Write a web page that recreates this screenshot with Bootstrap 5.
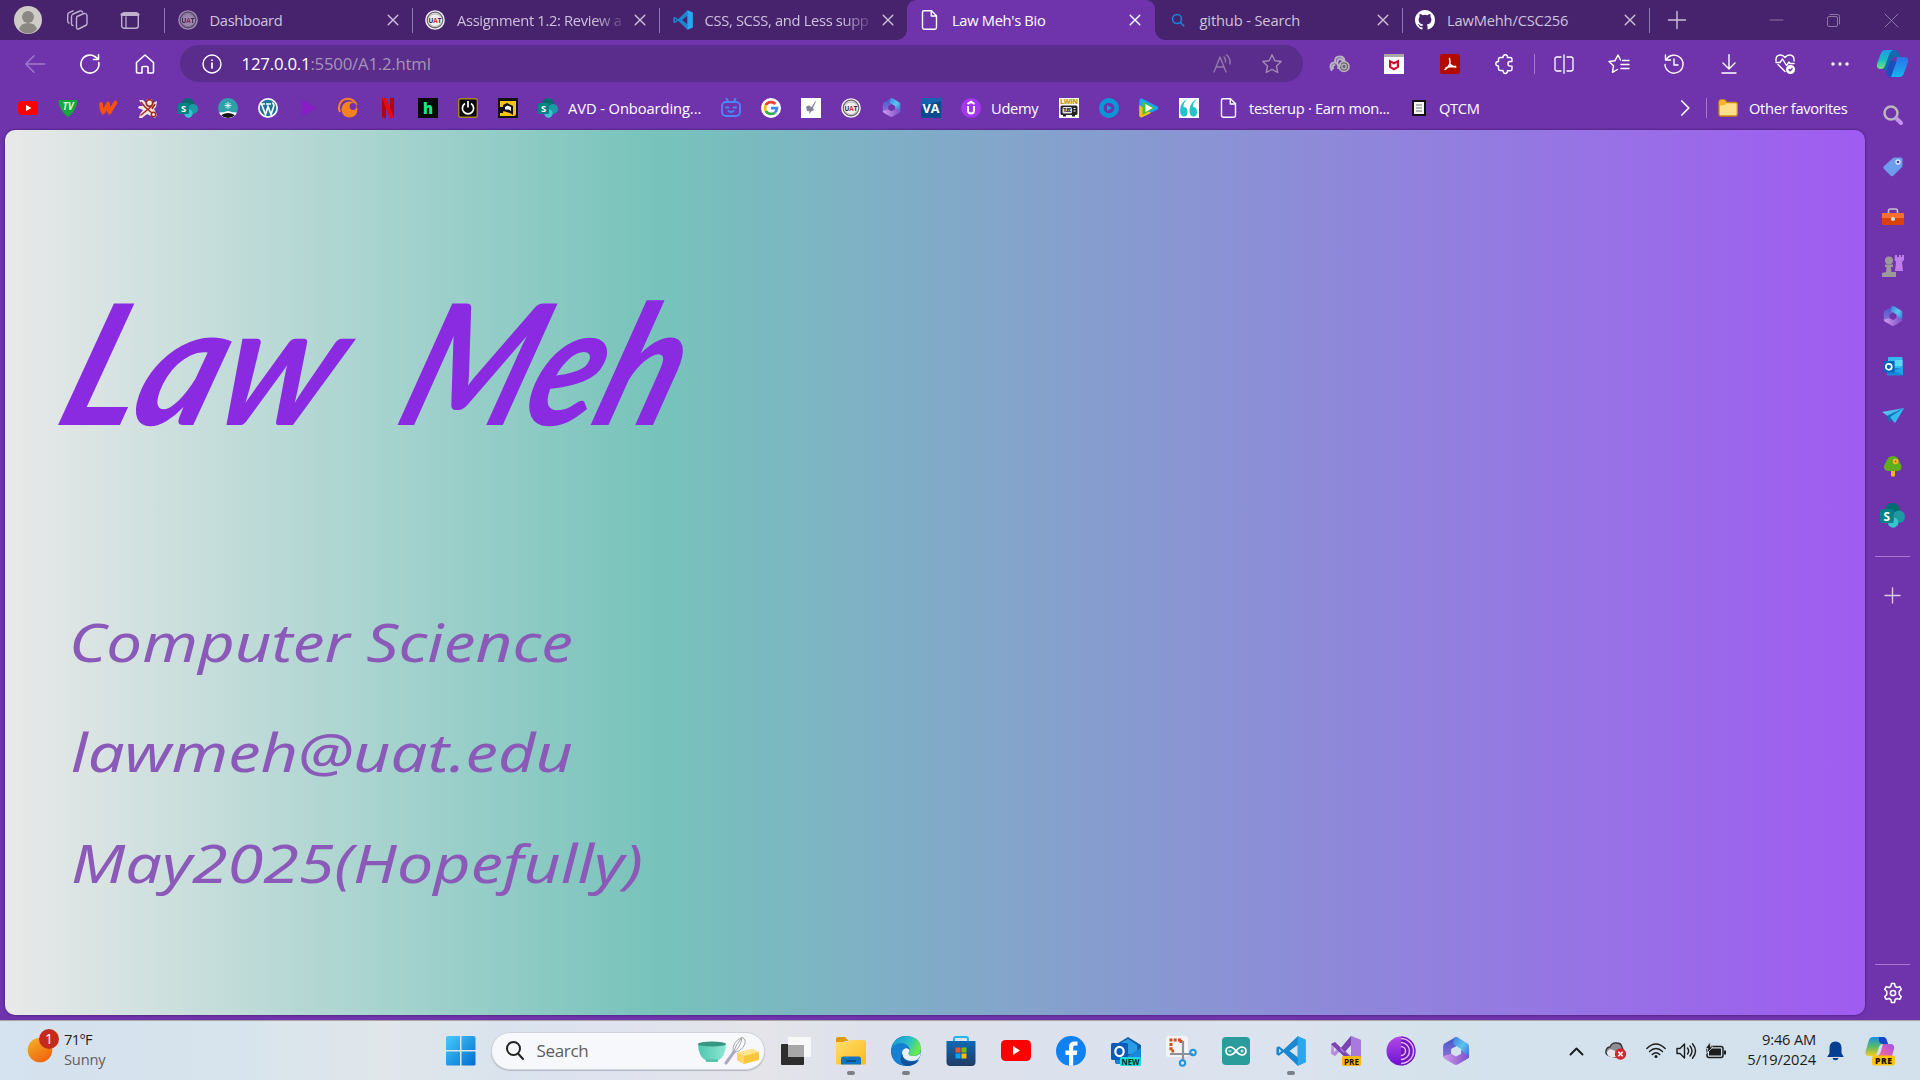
<!DOCTYPE html>
<html lang="en">
<head>
<meta charset="utf-8">
<title>Law Meh's Bio</title>
<link rel="stylesheet" href="https://cdn.jsdelivr.net/npm/bootstrap@5.3.0/dist/css/bootstrap.min.css">
<style>
body{width:1920px;height:1080px;overflow:hidden;background:#6f34ac;font-family:"Open Sans","Noto Sans",sans-serif;font-size:14.7px;letter-spacing:-.32px;color:#fff;line-height:20px}
svg{display:block;flex:none;overflow:visible}
svg text{letter-spacing:0}
.cell{display:flex;align-items:center;justify-content:center;flex:none}
.strip{height:40px;background:#47226d}
.tabx{width:247.5px;height:40px;padding-left:13px;color:#cdc2da;border-left:0 solid;position:relative}
.tabx .ttl{width:166px;margin-left:12px;margin-right:7px;white-space:nowrap}
.tabx .fade-end{-webkit-mask-image:linear-gradient(90deg,#000 138px,rgba(0,0,0,.15) 166px);mask-image:linear-gradient(90deg,#000 138px,rgba(0,0,0,.15) 166px)}
.sepd::before{content:"";position:absolute;left:-.5px;top:8px;width:1px;height:25px;background:#8f78aa}
.tab-on{background:#6f34ac;color:#fff;border-radius:9px 9px 0 0}
.tab-on::before,.tab-on::after{content:"";position:absolute;bottom:0;width:10px;height:10px}
.tab-on::before{left:-10px;background:radial-gradient(circle at 0 0,transparent 9.5px,#6f34ac 10px)}
.tab-on::after{right:-10px;background:radial-gradient(circle at 100% 0,transparent 9.5px,#6f34ac 10px)}
.toolbar-row{height:47px;padding-left:7px}
.url{width:1123px;height:37px;border-radius:19px;background:#5a2c8b;font-size:16.8px;letter-spacing:-.22px;color:#a595b7}
.ln{fill:none;stroke:currentColor;stroke-width:1.4;stroke-linecap:round;stroke-linejoin:round}
.t55{width:55.2px}.b40{width:40px;height:24px}
.favs{height:43px;padding:0 0 2px 8px}
.lbl{white-space:nowrap}
.pageview{width:1860px;height:885px;border-radius:10px;margin-left:5px;background:linear-gradient(90deg,#e9e9e9 0,#77c3bb 35%,#a05bf1 100%);box-shadow:0 0 3px #3f1a6a}
.sidebar-col{width:55px;height:933px}
.sidebar-col hr{width:35px;margin:0;border-color:#b58ad8;opacity:.8}
.taskbar{height:60px;border-top:1px solid #a5a5a5;color:#1c1c1c;background:linear-gradient(90deg,#d5e2ef 0,#d7e4ed 12%,#e0e6ea 20%,#dae3ed 26%,#dfe3ef 32%,#e4e4e9 39.5%,#dde1ec 46%,#dbe3ee 66%,#d3e2ec 78%,#d2e1ec 100%)}
.searchbox{width:274px;height:38px;border-radius:19px;background:#f6f8fc;border:1px solid #cfd3dc;font-size:17px;color:#5c5c5c;box-shadow:0 1px 1px #b6bac4}
.twoline{padding-bottom:4px;letter-spacing:-.2px}
.app{width:55px;height:60px;position:relative}
.run::after{content:"";position:absolute;left:23.5px;bottom:6px;width:8px;height:4px;border-radius:2px;background:#7c7f84}
.name-art{fill:#8a2be2;font-family:Lato,"Open Sans",sans-serif;font-style:italic;font-weight:700}
.info-art{fill:#8b5ab8;font-family:"Noto Sans","Open Sans",sans-serif;font-style:italic}
</style>
<script src="https://cdn.jsdelivr.net/npm/bootstrap@5.3.0/dist/js/bootstrap.bundle.min.js"></script>
</head>
<body>
<svg width="0" height="0" class="position-absolute">
<defs>
<linearGradient id="gm1" x1="0" y1="0" x2="1" y2="1"><stop offset="0" stop-color="#3f7fe0"/><stop offset=".5" stop-color="#5cc4f2"/><stop offset="1" stop-color="#3a62c8"/></linearGradient>
<linearGradient id="gm2" x1="0" y1="0" x2="0" y2="1"><stop offset="0" stop-color="#3f57c8"/><stop offset="1" stop-color="#8a6fd8"/></linearGradient>
<linearGradient id="gm3" x1="0" y1="0" x2="1" y2="0"><stop offset="0" stop-color="#cf9aea"/><stop offset="1" stop-color="#7a4fc9"/></linearGradient>
<linearGradient id="gfold" x1="0" y1="0" x2="1" y2="1"><stop offset="0" stop-color="#ffdf70"/><stop offset="1" stop-color="#fbb91c"/></linearGradient>
<linearGradient id="gedge" x1="0" y1="0" x2="1" y2=".4"><stop offset="0" stop-color="#1592dc"/><stop offset=".6" stop-color="#2cc0c8"/><stop offset="1" stop-color="#6be84c"/></linearGradient>
<linearGradient id="gstore" x1="0" y1="0" x2="0" y2="1"><stop offset="0" stop-color="#0d6ab8"/><stop offset="1" stop-color="#213a66"/></linearGradient>
<linearGradient id="gwin" x1="0" y1="0" x2="1" y2="1"><stop offset="0" stop-color="#48cbfb"/><stop offset="1" stop-color="#006cd0"/></linearGradient>
<linearGradient id="gtel" x1="0" y1="0" x2="1" y2="1"><stop offset="0" stop-color="#6be0ff"/><stop offset="1" stop-color="#1478c8"/></linearGradient>
<linearGradient id="gsun" x1="0" y1="0" x2=".6" y2="1"><stop offset="0" stop-color="#f5b42c"/><stop offset="1" stop-color="#f0660d"/></linearGradient>
<linearGradient id="gvs" x1="0" y1="0" x2="1" y2="1"><stop offset="0" stop-color="#ddb4f4"/><stop offset="1" stop-color="#7b45b5"/></linearGradient>
<linearGradient id="gcp1" x1="0" y1="0" x2="0" y2="1"><stop offset="0" stop-color="#1b9de8"/><stop offset=".5" stop-color="#18bcc0"/><stop offset="1" stop-color="#7ae27c"/></linearGradient>
<linearGradient id="gcp2" x1="0" y1="0" x2="0" y2="1"><stop offset="0" stop-color="#2f6fe8"/><stop offset="1" stop-color="#12b5f2"/></linearGradient>
<linearGradient id="gcp3" x1="0" y1="0" x2="0" y2="1"><stop offset="0" stop-color="#1b8fe8"/><stop offset=".5" stop-color="#58b86a"/><stop offset="1" stop-color="#f5d020"/></linearGradient>
<linearGradient id="gcp4" x1="1" y1="0" x2="0" y2="1"><stop offset="0" stop-color="#a04ff0"/><stop offset="1" stop-color="#ff6f8a"/></linearGradient>
<linearGradient id="gtor" x1="0" y1="0" x2="0" y2="1"><stop offset="0" stop-color="#b44be8"/><stop offset="1" stop-color="#6e10d0"/></linearGradient>
<linearGradient id="gbowl" x1="0" y1="0" x2="1" y2="0"><stop offset="0" stop-color="#4fc5ac"/><stop offset="1" stop-color="#8de8d4"/></linearGradient>
</defs>
<symbol id="close" viewBox="0 0 20 20"><path d="M5.2 5.2l9.6 9.6M14.8 5.2l-9.6 9.6" stroke="currentColor" stroke-width="1.4" stroke-linecap="round"/></symbol>
<symbol id="uat" viewBox="0 0 20 20"><circle cx="10" cy="10" r="9.800" fill="#f6f6f6"/><circle cx="10" cy="10" r="7.800" fill="#f0eeee" stroke="#6d6770" stroke-width="1.200"/><path d="M4.500 7a6.500 6.500 0 0 1 11 0M4.500 13.500a6.500 6.500 0 0 0 11 0" fill="none" stroke="#b5b1b5" stroke-width="1"/><text x="10" y="12.500" font-size="6.500" font-weight="700" text-anchor="middle" fill="#2b2b33" font-family="Open Sans" textLength="13" lengthAdjust="spacingAndGlyphs">U<tspan fill="#c33">A</tspan>T</text></symbol>
<symbol id="sp" viewBox="0 0 20 20"><circle cx="10" cy="6" r="6" fill="#036c70"/><circle cx="15" cy="11" r="5" fill="#1a9ba1"/><circle cx="10.500" cy="15.500" r="4.200" fill="#37c6d0"/><rect x="0" y="5" width="11" height="11" rx="1" fill="#058187"/><text x="5.500" y="14" font-size="9.500" font-weight="700" text-anchor="middle" fill="#fff" font-family="Open Sans">S</text></symbol>
<symbol id="m365" viewBox="0 0 20 20"><path d="M10 0L2 4.500Q.8 5.300.8 6.700v7.500L6.500 13V8.500L12 5.500V1.200Q11 0 10 0z" fill="url(#gm2)"/><path d="M8.500.5q1.500-1 3 0L18 4.400q1.300.8 1.300 2.300V15l-5.600-2.500v-4L8 5z" fill="url(#gm1)"/><path d="M19.300 14q-.2 1.200-1.300 1.800l-6.500 3.700q-1.500.8-3 0L2 15.800Q.8 15 .8 13.800L6.500 12l3.500 2 3.700-2V9.500z" fill="url(#gm3)"/></symbol>
<symbol id="vsc" viewBox="0 0 20 20"><path d="M14.500.2L5 9.200 2 6.800.3 7.700v4.600l1.700.9 3-2.400 9.500 9 5.200-2.300V2.500zM2 11.500v-3L3.600 10zm12.500 2.700L9 10l5.500-4.200z" fill="#1b87d0" fill-rule="evenodd"/><path d="M14.500.2l5.200 2.300v15l-5.200 2.300z" fill="#2aa7f0"/></symbol>
<symbol id="pg" viewBox="0 0 20 20"><path class="ln" d="M4 .8h7.500l5 5V17.500q0 1.700-1.700 1.700H4.200q-1.700 0-1.700-1.700V2.300Q2.500.8 4 .8zM11.300 1v5h5"/></symbol>
</svg>

<header class="strip d-flex align-items-center">
 <div class="cell" style="width:56px"><svg width="28" height="28" viewBox="0 0 28 28"><circle cx="14" cy="14" r="14" fill="#cfccc8"/><circle cx="14" cy="11" r="6" fill="#8b8782"/><path d="M5 23q2-6 9-6t9 6q-4 4.500-9 4.500T5 23z" fill="#8b8782"/></svg></div>
 <div class="cell" style="width:43px;color:#c0b0d0"><svg class="ln" width="21" height="20" viewBox="0 0 21 20"><path d="M10 6.500l7-3q2.500-.5 3 2v8q0 1.500-1.500 2l-7 3.500q-2 .5-2-2V8.500q0-1.500.5-2zM6 15.500q-1.500 0-1.500-1.500V6.500Q4.500 5 6 4l7-3q1.500-.4 2.500 1M2 13Q.7 12.500.7 11V5Q.7 3.500 2 2.700L6 .8"/></svg></div>
 <div class="cell" style="width:61px;color:#c0b0d0"><svg class="ln" width="18" height="17" viewBox="0 0 18 17"><rect x=".7" y=".7" width="16.600" height="15.600" rx="2.500"/><path d="M1 2.400h16" stroke-width="3"/><path d="M5 5v11" stroke-width="1.300"/></svg></div>
 <div class="cell" style="width:4.500px"></div>
 <div class="tabx sepd d-flex align-items-center"><svg width="20" height="20" opacity=".5"><use href="#uat"/></svg><span class="ttl">Dashboard</span><svg width="20" height="20"><use href="#close"/></svg></div>
 <div class="tabx sepd d-flex align-items-center"><svg width="20" height="20"><use href="#uat"/></svg><span class="ttl fade-end">Assignment 1.2: Review a</span><svg width="20" height="20"><use href="#close"/></svg></div>
 <div class="tabx sepd d-flex align-items-center"><svg width="20" height="20"><use href="#vsc"/></svg><span class="ttl fade-end">CSS, SCSS, and Less supp</span><svg width="20" height="20"><use href="#close"/></svg></div>
 <div class="tabx tab-on d-flex align-items-center"><svg width="20" height="20"><use href="#pg"/></svg><span class="ttl">Law Meh's Bio</span><svg width="20" height="20"><use href="#close"/></svg></div>
 <div class="tabx d-flex align-items-center"><svg width="20" height="20" viewBox="0 0 20 20"><g fill="none" stroke="#1a86d8" stroke-width="1.600"><circle cx="9" cy="9" r="4.500"/><path d="M12.200 12.200l4 4"/></g></svg><span class="ttl" style="letter-spacing:-.15px">github - Search</span><svg width="20" height="20"><use href="#close"/></svg></div>
 <div class="tabx sepd d-flex align-items-center"><svg width="20" height="20" viewBox="0 0 16 16"><path fill="#fff" d="M8 0C3.580 0 0 3.580 0 8c0 3.540 2.290 6.530 5.470 7.590.4.070.55-.17.55-.38 0-.19-.01-.82-.01-1.490-2.010.37-2.530-.49-2.690-.94-.09-.23-.48-.94-.82-1.130-.28-.15-.68-.52-.01-.53.63-.01 1.080.58 1.230.82.72 1.210 1.870.87 2.330.66.07-.52.28-.87.510-1.070-1.780-.2-3.640-.89-3.640-3.950 0-.87.31-1.590.82-2.150-.08-.2-.36-1.020.08-2.120 0 0 .67-.21 2.200.82a7.700 7.700 0 0 1 4 0c1.530-1.040 2.200-.82 2.200-.82.44 1.100.16 1.920.08 2.120.51.56.82 1.270.82 2.150 0 3.070-1.870 3.750-3.650 3.950.29.25.54.73.54 1.480 0 1.070-.01 1.930-.01 2.200 0 .21.15.46.55.38A8 8 0 0 0 16 8c0-4.420-3.580-8-8-8z"/></svg><span class="ttl" style="letter-spacing:-.18px">LawMehh/CSC256</span><svg width="20" height="20"><use href="#close"/></svg></div>
 <div class="cell sepd position-relative h-100" style="width:55px;color:#cdc2da"><svg class="ln" width="18" height="18"><path d="M9 .5v17M.5 9h17"/></svg></div>
 <div class="cell ms-auto" style="width:57px;color:#8d77a6"><svg class="ln" width="13" height="14"><path d="M0 7h13" stroke-width="1"/></svg></div>
 <div class="cell" style="width:57px;color:#8d77a6"><svg class="ln" width="13" height="13" style="stroke-width:1"><rect x=".5" y="2.500" width="10" height="10" rx="1.500"/><path d="M3 .5h7.500q2 0 2 2V10"/></svg></div>
 <div class="cell" style="width:58px;color:#8d77a6"><svg class="ln" width="13" height="13" style="stroke-width:1"><path d="M0 0l13 13M13 0L0 13"/></svg></div>
</header>

<nav class="toolbar-row d-flex align-items-center">
 <div class="cell t55" style="color:#a27bcb"><svg class="ln" width="20" height="18"><path d="M19.500 9H.8M9 .8L.8 9 9 17.200"/></svg></div>
 <div class="cell t55"><svg class="ln" width="20" height="20" style="stroke-width:1.600"><path d="M18.800 8.500A9 9 0 1 1 15.500 3L18 5M18.500.8V5.500h-5"/></svg></div>
 <div class="cell t55"><svg class="ln" width="20" height="20" style="stroke-width:1.600"><path d="M1.500 8.500L10 1l8.500 7.500V18q0 1-1 1H13v-5.500q0-1-1-1H8q-1 0-1 1V19H2.500q-1 0-1-1z"/></svg></div>
 <div class="url d-flex align-items-center" style="margin-left:7px">
  <svg class="ln text-white" style="margin-left:22px" width="20" height="20"><circle cx="10" cy="10" r="9"/><path d="M10 9v5M10 6v.2" stroke-width="1.700"/></svg>
  <span class="lbl" style="margin-left:20px"><span class="text-white">127.0.0.1</span>:5500/A1.2.html</span>
  <svg class="ln ms-auto" width="20" height="20" style="color:#927ba9"><path d="M1 18L7 3l6 15M3.200 13h7.800M11 3q2 2 1.500 5M13.500 1q4 3 3.500 9"/></svg>
  <svg class="ln" width="20" height="20" viewBox="0 0 20 20" style="color:#a08ab6;margin:0 21px 0 29px"><path d="M10 .8l2.800 5.900 6.400.8-4.700 4.500 1.200 6.500L10 15.300l-5.700 3.200 1.200-6.500L.8 7.500l6.400-.8z"/></svg>
 </div>
 <div class="d-flex align-items-center" style="margin-left:9px">
 <div class="cell t55"><svg width="21" height="19" viewBox="0 0 21 19"><g fill="none" stroke="#b9b5bd" stroke-linecap="round"><path d="M2.500 16Q-.5 9 5.500 8.500q3-.2 3.500 3M4 14.500q-1-3.500 1.500-3.500" stroke-width="2"/><path d="M6 7.500Q6 2.500 10.500 2.500t5 4.500M8.500 8q0-3 2.500-3t2.500 2.500" stroke-width="2"/><circle cx="15" cy="12.500" r="5" fill="#6a6570" stroke-width="1.600"/><circle cx="15" cy="12.500" r="2.300" stroke-width="1.200"/><path d="M9 14l2-3" stroke-width="2"/></g></svg></div>
 <div class="cell t55"><svg width="20" height="20"><path fill="#fff" d="M0 0h20v20H0z"/><path fill="#a9a9a9" d="M0 0h20v3H0z"/><path d="M5 5.500l5 2.500 5-2.500v8l-5 3-5-3zM7.200 9v3.500l2.800 1.600 2.800-1.600V9L10 10.500z" fill="#c8102e" fill-rule="evenodd"/></svg></div>
 <div class="cell t55"><svg width="20" height="20"><rect width="20" height="20" rx="2.500" fill="#b30b00"/><path d="M9.500 4.500q1 4 0 6-2 4-4.500 5M9.800 10q1.500 2.500 6 3M6 13.800q4-1.800 9.500-1.300" fill="none" stroke="#fff" stroke-width="1.500" stroke-linecap="round"/></svg></div>
 <div class="cell t55"><svg class="ln" width="20" height="20"><path d="M5.500 3.500H8q0-2.700 2.300-2.700t2.200 2.700H15q2 0 2 2v2h-2q-2 0-2 2.300t2 2.300h2v2.700q0 2-2 2h-2.500q0 2.700-2.200 2.700T8 16.500H5.500q-2 0-2-2V12Q.8 12 .8 9.800t2.700-2.300v-2q0-2 2-2z"/></svg></div>
 </div>
 <div class="vr bg-white" style="height:20px;align-self:center;margin-left:2px;opacity:.35"></div>
 <div class="d-flex" style="margin-left:1px">
 <div class="cell t55"><svg class="ln" width="20" height="20"><path d="M7 17H3q-2 0-2-2V5q0-2 2-2h4M13 3h4q2 0 2 2v10q0 2-2 2h-4M10 .8v18.500" style="stroke-width:1.300"/></svg></div>
 <div class="cell t55"><svg class="ln" width="22" height="20"><path d="M12.500 6L10 1 7 6.700 1 7.500l4.500 4.300-1 6.500 5-2.800M14.500 6.500H21M13 10.500h8M13 14.500h8"/></svg></div>
 <div class="cell t55"><svg class="ln" width="20" height="20"><path d="M2 6A9 9 0 1 1 1 10.500M1.500 1v5h5M10 5v6h4"/></svg></div>
 <div class="cell t55"><svg class="ln" width="16" height="20"><path d="M8 .8v14M2 9l6 6 6-6M1 19h14"/></svg></div>
 <div class="cell t55"><svg class="ln" width="20" height="20"><path d="M10 17.500L3 10.500M1 7Q.5 1 5.500 1 8 1 10 3.500 12 1 14.500 1 19.500 1 19 7M1 8.500h4L7.500 5l4 6.500L14 8l1 1.500h4"/><circle cx="15.500" cy="15.500" r="3.900" fill="#fff"/><path d="M14 15.500l1.200 1.200 2-2.200" stroke="#6f34ac"/></svg></div>
 <div class="cell t55"><svg width="18" height="4" fill="#fff"><circle cx="2" cy="2" r="1.700"/><circle cx="9" cy="2" r="1.700"/><circle cx="16" cy="2" r="1.700"/></svg></div>
 </div>
 <div class="cell" style="width:51px"><svg width="31" height="27" viewBox="0 0 31 27"><path d="M17 0q4 0 5 4l1 3h-5q-3 0-4 3l-4 10H6L11 5q2-5 6-5z" fill="#126bb0"/><path d="M9 0h8q-4 1-5 5L8 16q-1 3-4 3-5 0-4-5L4 3q1-3 5-3z" fill="url(#gcp1)"/><path d="M14 10l-5 12q1 5 5 5h3l5-14z" fill="#1a4fc0"/><path d="M20 7h7q5 0 4 5l-4 11q-1 4-5 4h-8l5-14q1-4 1-6z" fill="url(#gcp2)"/></svg></div>
</nav>

<div class="d-flex">
<div style="width:1865px">
<div class="favs d-flex align-items-center">
 <div class="cell b40"><svg width="20" height="14"><rect width="20" height="14" rx="3.500" fill="#f00"/><path d="M8 4l5.500 3L8 10z" fill="#fff"/></svg></div>
 <div class="cell b40"><svg width="20" height="18"><path d="M2 1h16q2 0 1.500 2-2 9-8 14-1.500 1.500-3 0Q2 11 .5 3 0 1 2 1z" fill="#12a83b"/><text x="10" y="11" font-size="10" font-weight="700" font-style="italic" fill="#d6f5d6" text-anchor="middle">TV</text></svg></div>
 <div class="cell b40"><svg width="18" height="14"><path d="M2 3q1 8 2 8.500Q7 8 9 2.500 9 8 10.500 11.500 13 7 16.500 1.500" fill="none" stroke="#ff500a" stroke-width="3.800" stroke-linecap="round" stroke-linejoin="round"/></svg></div>
 <div class="cell b40"><svg width="20" height="20"><path d="M1 2h4l3 3 1-4h5l1 4 4-2-1 6-2 2 3 6-2 3-4-2-4-2-5 4H1l1-4 3-4-5-2 1-2 4 0z" fill="#f4e6e2"/><path d="M2.500 17.500L14 8M3 4l4 5 7 6M17 6l-3 5" stroke="#a32a22" stroke-width="1.600" fill="none"/><circle cx="11.500" cy="5" r="3.300" fill="none" stroke="#a32a22" stroke-width="1.700"/><circle cx="15.500" cy="16.500" r="2.200" fill="none" stroke="#a32a22" stroke-width="1.400"/></svg></div>
 <div class="cell b40"><svg width="20" height="20"><use href="#sp"/></svg></div>
 <div class="cell b40"><svg width="20" height="20"><circle cx="10" cy="10" r="10" fill="#2f9fa8"/><path d="M1 14.500q4 0 9-1.500 5 1.500 9 1.500Q16.500 20 10 20T1 14.500z" fill="#fff"/><path d="M3 17.200q4-2.200 7-2.200t7 2.200q-3 2.800-7 2.800t-7-2.800z" fill="#151515"/><path d="M10 4v7M6.500 7.500h7M7.500 5l5 5M12.500 5l-5 5" stroke="#d8f8ff" stroke-width=".9"/></svg></div>
 <div class="cell b40"><svg width="20" height="20"><circle cx="10" cy="10" r="10" fill="#f4f8fb"/><circle cx="10" cy="10" r="8.300" fill="#21759b"/><path d="M3.500 6l4 10.500L10 8.500l3 8 3-9q-.5-1.500-1.500-3M2.500 6H7M8 6h5" stroke="#fff" stroke-width="1.600" fill="none"/></svg></div>
 <div class="cell b40"><svg width="16" height="16"><path d="M2 0l13 7q1 .9 0 1.800L2 16z" fill="#8a1cc8"/></svg></div>
 <div class="cell b40"><svg width="20" height="20"><path d="M2 14A9 9 0 1 1 18.500 7" fill="none" stroke="#f58220" stroke-width="2"/><circle cx="11.500" cy="11.500" r="8" fill="#f58220"/><circle cx="15" cy="8.500" r="3.400" fill="#6f34ac"/></svg></div>
 <div class="cell b40"><svg width="12" height="20"><path d="M0 0h4v20l-4-.5zM8 0h4v19.500L8 20z" fill="#b1060f"/><path d="M0 0h4l8 19.500L8 20z" fill="#e50914"/></svg></div>
 <div class="cell b40"><svg width="20" height="20"><path d="M0 0h20v20H0z" fill="#060a08"/><text x="10" y="16" font-size="15" font-weight="800" fill="#1ce783" text-anchor="middle">h</text></svg></div>
 <div class="cell b40"><svg width="20" height="20"><rect x=".7" y=".7" width="18.600" height="18.600" rx="1.500" fill="#0b0b0b" stroke="#a98224" stroke-width="1.400"/><path d="M7 5.500a5.600 5.600 0 1 0 6 0M10 3v6.500" fill="none" stroke="#fff" stroke-width="1.700"/></svg></div>
 <div class="cell b40"><svg width="20" height="20"><path d="M0 0h20v20H0z" fill="#111"/><path d="M2 3h16v13q0 2-2 2H2v-3h3L6 9H2z" fill="#f7c313"/><path d="M5 9V7l4-2 6 3v9l-3-2-7-2z" fill="#111"/><path d="M7 9l2.500-1.500L13 9v4l-2.500-1.500H7z" fill="#fff"/></svg></div>
 <div class="cell b40"><svg width="20" height="20"><use href="#sp"/></svg></div>
 <span class="lbl" style="width:143px;letter-spacing:-.08px">AVD - Onboarding...</span>
 <div class="cell b40"><svg width="20" height="19" fill="none" stroke="#4a86f7" stroke-width="1.900" stroke-linecap="round"><rect x="1" y="4" width="18" height="14" rx="4"/><path d="M5.500.8L7.500 4M14.500.8L12.500 4M5 9.500h2.500M12.500 9.500H15M7.500 13q2.500 2.200 5 0"/></svg></div>
 <div class="cell b40"><svg width="20" height="20"><circle cx="10" cy="10" r="10" fill="#fff"/><g fill="none" stroke-width="2.700"><path d="M14.400 6A6 6 0 0 0 4.700 7.200" stroke="#ea4335"/><path d="M4.700 7.200a6 6 0 0 0 0 5.600" stroke="#fbbc05"/><path d="M4.700 12.800A6 6 0 0 0 14 14.400" stroke="#34a853"/><path d="M14 14.400a6 6 0 0 0 2-4.200H10" stroke="#4285f4"/></g></svg></div>
 <div class="cell b40"><svg width="20" height="20"><path d="M0 0h20v20H0z" fill="#fff"/><path d="M15 3.500L10 14l-2 2 .5-3L14 3.500zM5 8.500l3-1 4 2.500 1 2-3 1.500-4-.5z" fill="#7d8499"/></svg></div>
 <div class="cell b40"><svg width="20" height="20"><use href="#uat"/></svg></div>
 <div class="cell b40"><svg width="19" height="19"><use href="#m365"/></svg></div>
 <div class="cell b40"><svg width="20" height="20"><path d="M0 0h20v20H0z" fill="#0a4a8f"/><path d="M0 0h20v3L0 8z" fill="#1662ae"/><text x="10" y="15" font-size="13" font-weight="700" fill="#fff" text-anchor="middle" textLength="17" lengthAdjust="spacingAndGlyphs">VA</text></svg></div>
 <div class="cell b40"><svg width="20" height="20"><circle cx="10" cy="10" r="10" fill="#a435f0"/><path d="M7 8v4.500q0 3 3 3t3-3V8M6.500 6L10 3.800 13.500 6" fill="none" stroke="#fff" stroke-width="2"/></svg></div>
 <span class="lbl" style="width:58px">Udemy</span>
 <div class="cell b40"><svg width="20" height="20"><path d="M0 0h20v20H0z" fill="#fff"/><rect x="1.500" y="7.500" width="17" height="9.500" rx="1.500" fill="#222"/><path d="M4 17h3v1.500H4zM13 17h3v1.500h-3z" fill="#222"/><rect x="3.500" y="9" width="9.500" height="6.500" rx="1.500" fill="#e4e4e4"/><path d="M14.500 10.500h2M14.500 13h2" stroke="#fff"/><text x="8.200" y="14" font-size="4.500" font-weight="700" fill="#333" text-anchor="middle" textLength="8">TUBE</text><text x="10" y="6" font-size="7" font-weight="800" fill="#c79a12" text-anchor="middle" textLength="18">LWIN</text></svg></div>
 <div class="cell b40"><svg width="20" height="20"><circle cx="10" cy="10" r="10" fill="#0a96d6"/><circle cx="10" cy="10" r="5.300" fill="#6a34ae"/><path d="M8 7l5 3-5 3z" fill="#0aa2dc"/></svg></div>
 <div class="cell b40"><svg width="20" height="20"><path d="M3 .6Q.3 0 .3 3v14q0 3 3 2l15-7.500q2-1.500 0-3z" fill="#18a6f5"/><path d="M.3 7v10q0 3 2.700 2.300L12 15z" fill="#fbbf10"/><path d="M3.500 3v14L16 10z" fill="#46c33d"/><path d="M6.500 6v8L13.500 10z" fill="#fff"/></svg></div>
 <div class="cell b40"><svg width="20" height="20"><path d="M0 0h20v20H0z" fill="#fff"/><path d="M8.500 1Q4 5 4.500 9q4 0 4 5t-4 4.500Q1 18 1 12 1.500 4 8.500 1zM18 1q-4.500 4-4 8 4 0 4 5t-4 4.500q-3.500-.5-3.500-6.500Q11 4 18 1z" fill="#22c4ca"/></svg></div>
 <div class="cell b40"><svg width="20" height="20"><use href="#pg"/></svg></div>
 <span class="lbl" style="width:150px">testerup · Earn mon...</span>
 <div class="cell b40"><svg width="14" height="16"><rect x="1" y="1" width="12" height="14" fill="#f4f4f4" stroke="#111" stroke-width="2"/><path d="M4 5h6M4 8h6M4 11h6" stroke="#777"/></svg></div>
 <span class="lbl" style="width:42px">QTCM</span>
 <div class="cell ms-auto" style="width:36px"><svg class="ln" width="8" height="16" style="stroke-width:1.700"><path d="M.8 1l7 7-7 7"/></svg></div>
 <div class="vr bg-white" style="height:20px;align-self:center;opacity:.35;margin-left:3px"></div>
 <div class="cell" style="width:42px"><svg width="20" height="18"><path d="M1 3q0-2.200 2-2.200h3.500L9 3.500h8.500q1.800 0 1.800 2V15q0 2-2 2H3q-2 0-2-2z" fill="#ffe08a" stroke="#c78b12" stroke-width="1.300"/><path d="M1.300 6.500V3q0-1.800 2-1.800h3L8.500 4 7 6z" fill="#f3b526"/></svg></div>
 <span class="lbl" style="width:116px">Other favorites</span>
</div>
<main class="pageview">
 <h1 class="m-0 lh-1"><svg width="700" height="330" viewBox="5 130 700 330"><g class="name-art" transform="translate(0 425) skewX(-19)" font-size="168"><text x="52" y="0" textLength="272" lengthAdjust="spacingAndGlyphs">Law</text><text x="392" y="0" textLength="274" lengthAdjust="spacingAndGlyphs">Meh</text></g></svg></h1>
 <svg class="info-art" width="700" height="460" viewBox="5 460 700 460" font-size="52"><text x="69" y="662" textLength="504" lengthAdjust="spacingAndGlyphs">Computer Science</text><text x="71" y="771.500" textLength="502" lengthAdjust="spacingAndGlyphs">lawmeh@uat.edu</text><text x="71" y="882.500" textLength="572" lengthAdjust="spacingAndGlyphs">May2025(Hopefully)</text></svg>
</main>
</div>
<aside class="sidebar-col d-flex flex-column align-items-center">
 <div class="cell" style="height:56px"><svg width="20" height="20"><circle cx="8" cy="8" r="6.500" fill="none" stroke="#b9b5b8" stroke-width="2.500"/><path d="M14 14l4 4" stroke="#c590f0" stroke-width="4" stroke-linecap="round"/></svg></div>
 <div class="cell" style="height:48px"><svg width="20" height="20"><path d="M9.500 1.500Q10.500.5 12 .5h6q1.500 0 1.500 1.500v6q0 1.500-1 2.500l-8 8q-1.500 1.500-3 0L1 12q-1.500-1.500 0-3z" fill="#6d9cec"/><circle cx="15" cy="5" r="2" fill="#503a9c" stroke="#dce8ff" stroke-width="1.300"/></svg></div>
 <div class="cell" style="height:51px"><svg width="22" height="18"><path d="M6.500 6V3q0-2 2-2h5q2 0 2 2v3" fill="none" stroke="#c7c3c5" stroke-width="1.600"/><rect y="5" width="22" height="12" rx="1.500" fill="#d8430d"/><path d="M0 6q0-1 1-1h20q1 0 1 1v4H0z" fill="#f4702e"/><circle cx="11" cy="11" r="2" fill="#ddd"/></svg></div>
 <div class="cell" style="height:48px"><svg width="22" height="22"><path d="M13 0h2v2h2V0h2v2h1V0h2v5l-2 2 1 9H13l1-9-1.500-2z" fill="#c07de8"/><g fill="#9c9998"><circle cx="7" cy="5.500" r="4"/><path d="M3 9.500h8v2.500H9L9.500 17H14v5H0v-4l4-1 .5-5H3z"/></g></svg></div>
 <div class="cell" style="height:51px"><svg width="20" height="20"><use href="#m365"/></svg></div>
 <div class="cell" style="height:50px"><svg width="20" height="19"><rect x="5" width="14.500" height="13" rx="1" fill="#36b9ee"/><path d="M12 3h7.500v6H12z" fill="#5bd7fa"/><path d="M4 18.500V11h16v6.500q0 1-1 1z" fill="#1688d8"/><path d="M20 9.500L11 14l9 4z" fill="#1ca5e8"/><rect y="4" width="11.500" height="11.500" rx="1" fill="#0364b8"/><circle cx="5.800" cy="9.800" r="3" fill="none" stroke="#fff" stroke-width="1.700"/></svg></div>
 <div class="cell" style="height:50px"><svg width="22" height="16"><path d="M0 4L22 0 13 15 7 9z" fill="url(#gtel)"/><path d="M22 0L5 8l2 6 3-3z" fill="#0d6fb8"/><path d="M22 0L8 9l5 6z" fill="#35b9ee"/></svg></div>
 <div class="cell" style="height:50px"><svg width="18" height="21"><path d="M7 14h4v6q-2 1.500-4 0z" fill="#f2b01e"/><path d="M9 0q5 0 6.500 6 2 3 2 5 0 4-5 4H5q-5 0-5-4 0-2 2-5Q4 0 9 0z" fill="#5fae1e"/><circle cx="11.500" cy="5.500" r="2.700" fill="#ffb72b"/><circle cx="11.500" cy="5.500" r="1" fill="#f0401c"/></svg></div>
 <div class="cell" style="height:49px"><svg width="25" height="25"><use href="#sp"/></svg></div>
 <hr style="margin-top:16px">
 <div class="cell" style="height:77px;color:#dccbe9"><svg class="ln" width="15" height="15"><path d="M7.500 0v15M0 7.500h15"/></svg></div>
 <hr class="mt-auto">
 <div class="cell" style="height:55px"><svg class="ln" width="20" height="20" style="stroke-width:1.500"><path d="M8.500 .5h3l.7 3 1.700 1 2.900-.9 1.500 2.700-2.100 2.200v3l2.100 2.200-1.500 2.700-2.900-.9-1.700 1-.7 3h-3l-.7-3-1.700-1-2.900.9-1.500-2.700 2.100-2.200v-3L1.700 6.300l1.500-2.700 2.900.9 1.700-1z"/><circle cx="10" cy="10" r="2.600"/></svg></div>
</aside>
</div>

<footer class="taskbar d-flex align-items-center">
 <svg width="36" height="40" style="margin-left:27px"><circle cx="13" cy="19" r="12.300" fill="url(#gsun)"/><circle cx="22" cy="8" r="10" fill="#c42b1c"/><text x="22" y="13" font-size="14" fill="#fff" text-anchor="middle">1</text></svg>
 <div class="twoline" style="width:382.500px;padding-left:1px"><div style="letter-spacing:-.7px">71°F</div><div style="color:#5c6066">Sunny</div></div>
 <svg width="30" height="30"><path d="M1.500 0H14v14H0V1.500Q0 0 1.500 0zM15.500 0h12q2 0 2 1.500V14h-14zM0 15.500h14v14H1.500q-1.500 0-1.500-1.500zM15.500 15.500h14V28q0 1.500-1.500 1.500H15.500z" fill="url(#gwin)"/></svg>
 <div class="searchbox d-flex align-items-center" style="margin-left:15px">
  <svg width="20" height="20" style="margin-left:13px" fill="none" stroke="#222" stroke-width="2"><circle cx="8.500" cy="7.500" r="6.500"/><path d="M13 12.500l5 5.500" stroke-linecap="round"/></svg>
  <span style="margin-left:12px">Search</span>
  <svg class="ms-auto me-1" width="62" height="28"><path d="M0 7h28q-.5 13-8 16.500H8Q.5 20 0 7z" fill="url(#gbowl)"/><ellipse cx="14" cy="7" rx="14" ry="2.500" fill="#359782"/><path d="M8 22h12v3H8z" fill="#5bc4ae"/><path d="M28 26l8-11" stroke="#b2a6c6" stroke-width="3" stroke-linecap="round"/><g fill="none" stroke="#a8a8ac" stroke-width="1"><path d="M35 16Q34 4 44 .5q6 2 1 10-3 4-10 5.500Q38 7 44 .5M35 16Q43 10 44 .5"/></g><path d="M39 16l15-4 7 3v8l-15 4-7-4z" fill="#f9c73f"/><path d="M39 16l15-4 7 3-15 4z" fill="#ffe58b"/><path d="M39 16l7 3v8l-7-4z" fill="#fbd666"/></svg>
 </div>
 <div class="d-flex" style="margin-left:3.500px">
 <div class="cell app"><svg width="30" height="28"><rect y="7" width="23" height="21" rx="1" fill="#2d2d2d"/><rect x="7" width="23" height="20" rx="1" fill="#f8f8f8"/><path d="M7 8h16v12H7z" fill="#a7a7a7"/></svg></div>
 <div class="cell app run"><svg width="30" height="28"><path d="M0 2q0-2 2-2h7l4 4h-3L0 8z" fill="#de9c0a"/><path d="M0 5h12l2-2h14q2 0 2 2v21q0 1.500-1.500 1.500h-27Q0 27.500 0 26z" fill="url(#gfold)"/><path d="M5 27.500V22q0-2.500 2.500-2.500h15q2.500 0 2.500 2.500v5.500z" fill="#1272c4"/><path d="M10 23h10v2H10z" fill="#0b4d8a"/></svg></div>
 <div class="cell app run"><svg width="30" height="30"><circle cx="15" cy="15" r="15" fill="#0c66b4"/><path d="M1 11Q4 0 16 0q14 1 14 13 0 7-8 7-6 0-4-4 3-6-6-7-7-.5-11 5z" fill="url(#gedge)"/><path d="M0 15q1-7 9-8 7 0 9 5-6-1-7 5-.500 8 10 9 4 0 7-2-5 6-13 6Q1 29 0 15z" fill="#167fd2"/><path d="M11 17q0-4 4.500-5 4 1 2.500 4-2 4 4 4 6 0 8-4-1 9-9 9-9 0-10-8z" fill="#e6f0f6"/><path d="M11 18q1 8 10 8 4 0 7-2-4 6-13 6-8-3-4-12z" fill="#12509a"/></svg></div>
 <div class="cell app"><svg width="30" height="30"><path d="M8 7V3q0-2 2-2h10q2 0 2 2v4" fill="none" stroke="#20b6ee" stroke-width="2"/><path d="M.5 5h29v21q0 4-4 4H4.500q-4 0-4-4z" fill="url(#gstore)"/><path d="M9.500 11.500h5v5h-5z" fill="#f35325"/><path d="M15.500 11.500h5v5h-5z" fill="#81bc06"/><path d="M9.500 17.500h5v5h-5z" fill="#05a6f0"/><path d="M15.500 17.500h5v5h-5z" fill="#ffba08"/></svg></div>
 <div class="cell app"><svg width="30" height="21"><rect width="30" height="21" rx="4.500" fill="#f00"/><path d="M12 6l7 4.500-7 4.500z" fill="#fff"/></svg></div>
 <div class="cell app"><svg width="30" height="30"><circle cx="15" cy="15" r="15" fill="#1081f0"/><path d="M13 29.800V19H9.500v-4.500H13V11q0-5.500 5.500-5.500h3v4H19q-1.800 0-1.800 2v3h4.200l-.7 4.500h-3.500v10.800z" fill="#fff"/></svg></div>
 <div class="cell app"><svg width="30" height="30"><path d="M4 9L17 1l13 8v17q0 2-2 2H6q-2 0-2-2z" fill="#1262a8"/><path d="M6 9L17 3l9 6v9H6z" fill="#2a9ce6"/><path d="M5 14l12 6 13-8v14q0 2-2 2H7q-2 0-2-2z" fill="#1a86d6"/><rect y="7" width="17" height="17" rx="1.500" fill="#0a5cb8"/><ellipse cx="8.500" cy="15.500" rx="4.200" ry="4.700" fill="none" stroke="#fff" stroke-width="2.200"/><rect x="9" y="21" width="21" height="9" rx="1.500" fill="#20dcd8"/><text x="19.500" y="29" font-size="8.500" font-weight="700" text-anchor="middle" fill="#06282c" textLength="18" lengthAdjust="spacingAndGlyphs">NEW</text></svg></div>
 <div class="cell app"><svg width="30" height="30"><rect width="22" height="21" rx="2.500" fill="#f3f3f5"/><path d="M15 4H5v11h3M15 4v4" fill="none" stroke="#d64a16" stroke-width="3" stroke-dasharray="3 1.300"/><path d="M17 5v20M4 18h23" stroke="#8e9298" stroke-width="2.200"/><g fill="none" stroke="#2094e0" stroke-width="2"><circle cx="27" cy="16.500" r="2.700"/><circle cx="16.500" cy="27" r="2.700"/></g></svg></div>
 <div class="cell app"><svg width="28" height="28"><rect width="28" height="28" rx="4" fill="#2a9c9a"/><path d="M14 14q-3-4-6-4-4 .3-4 4 .2 3.800 4 4 3 0 6-4 3-4 6-4 4 .3 4 4-.2 3.800-4 4-3 0-6-4z" fill="none" stroke="#fff" stroke-width="1.700"/><path d="M6.500 14h3M18.500 14h3M20 12.500v3" stroke="#fff"/></svg></div>
 <div class="cell app run"><svg width="30" height="30"><use href="#vsc"/></svg></div>
 <div class="cell app"><svg width="30" height="30"><path d="M20 0l10 4v20l-9 4L9 15l-5 5-4-2V8l4-2 6 6zM20 9v11l-6-5.500zM3 11v5l2.500-2.500z" fill="url(#gvs)" fill-rule="evenodd"/><path d="M20 0l10 4v20l-9 4z" fill="#a979db"/><path d="M20 0L9 13l4 4 7-8zM0 8l4-2 17 17v5z" fill="#7a44b4"/><rect x="11" y="20" width="19" height="10" rx="1.500" fill="#fcb614"/><text x="20.500" y="28.500" font-size="9" font-weight="700" text-anchor="middle" fill="#1a1200" textLength="15" lengthAdjust="spacingAndGlyphs">PRE</text></svg></div>
 <div class="cell app"><svg width="30" height="30"><circle cx="15" cy="15" r="14.500" fill="url(#gtor)"/><path d="M15 .5a14.500 14.500 0 0 1 0 29z" fill="#7116bb"/><g fill="none" stroke="#e1b3fb" stroke-width="1.500"><path d="M15 2.500a12.500 12.500 0 0 1 0 25M15 6.500a8.500 8.500 0 0 1 0 17M15 10.500a4.500 4.500 0 0 1 0 9"/></g></svg></div>
 <div class="cell app"><svg width="28" height="28"><use href="#m365"/></svg></div>
 </div>
 <div class="d-flex align-items-center ms-auto" style="width:359px">
 <div class="cell" style="width:30px"><svg class="ln" width="13" height="8" style="stroke-width:1.900"><path d="M.5 7.500l6-6 6 6"/></svg></div>
 <div class="cell" style="width:50px"><svg width="22" height="18"><path d="M5 14q-5-1-4-5.500Q2 5 5 5q2-5 7-4 4 0 5 4l2 5-8 5z" fill="#8b8d90" stroke="#333" stroke-width="1.300"/><path d="M2 10q2-4 6-2l6 3-3 4H6q-4-.5-4-5z" fill="#e4e8ec"/><circle cx="15.500" cy="12" r="5.700" fill="#d3262e"/><path d="M13.300 9.800l4.400 4.400M17.700 9.800l-4.400 4.400" stroke="#fff" stroke-width="1.500"/></svg></div>
 <div class="cell" style="width:30px"><svg class="ln" width="20" height="16"><path d="M.8 5.500q9-9 18.400 0M3.500 8.500q6.500-6 13 0M6.200 11.500q3.800-3.500 7.600 0"/><circle cx="10" cy="13.500" r="1.500" fill="currentColor" stroke="none"/></svg></div>
 <div class="cell" style="width:30px"><svg class="ln" width="20" height="16"><path d="M1 5.500h3L8.500 1v14L4 10.500H1zM11.500 5q2.300 3 0 6M14 3q4 5 0 10M16.500.8q6 7.200 0 14.400"/></svg></div>
 <div class="cell" style="width:30px"><svg width="20" height="16"><rect x="1" y="3.500" width="16" height="11" rx="2" fill="none" stroke="#1c1c1c" stroke-width="1.500"/><path d="M3 5.500h12v7H3zM18 7.500h2v4h-2z" fill="#1c1c1c"/><path d="M4-1L-.5 5.500h2.500L.5 10.500 7 4H4.500z" fill="#1c1c1c" stroke="#d3e2ec" stroke-width=".8"/></svg></div>
 <div class="twoline text-end" style="width:85px"><div>9:46 AM</div><div class="lbl" style="letter-spacing:-.1px">5/19/2024</div></div>
 <div class="cell" style="width:38px"><svg width="17" height="20"><path d="M8.500.5q6 .3 6 6.500v5l2.300 4H.2l2.300-4V7q0-6.200 6-6.500zM5.500 17h6q-.5 2.300-3 2.300T5.500 17z" fill="#063f92"/></svg></div>
 <div class="cell" style="width:52px"><svg width="30" height="28"><path d="M8 0h10q3 0 4 4l1 3h-5q-3 0-4 3l-3 9H4q-5 0-3-6L4 3q1-3 4-3z" fill="url(#gcp3)"/><path d="M14 0h4q3 0 4 4l1 3h-5q-3 0-4-3z" fill="#1547c4"/><path d="M18 7h7q5 0 4 5l-2 7H12q3-1 4-5l1-4q1-3 1-3z" fill="url(#gcp4)"/><rect x="7" y="18.500" width="23" height="10" rx="2.500" fill="#fcc40c"/><text x="18.500" y="27" font-size="8.500" font-weight="800" text-anchor="middle" fill="#1a1200" textLength="17">PRE</text></svg></div>
 </div>
</footer>
</body>
</html>
